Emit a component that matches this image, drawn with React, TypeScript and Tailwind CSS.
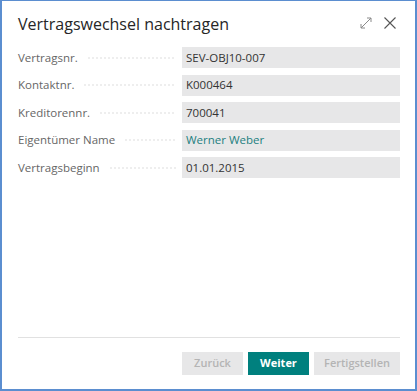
import React from 'react';

const fields = [
  { label: 'Vertragsnr.', value: 'SEV-OBJ10-007' },
  { label: 'Kontaktnr.', value: 'K000464' },
  { label: 'Kreditorennr.', value: '700041' },
  { label: 'Eigentümer Name', value: 'Werner Weber', link: true },
  { label: 'Vertragsbeginn', value: '01.01.2015' },
];

function FieldRow({ label, value, link }: { label: string; value: string; link?: boolean }) {
  return (
    <div className="flex h-[21px] items-center">
      <div className="flex w-[164px] items-center pr-[6px]">
        <span className="text-[11.5px] text-[#666666] whitespace-nowrap">{label}</span>
        {/* dotted leader */}
        <span className="ml-[9px] h-[2px] flex-1 bg-[radial-gradient(circle,#c8c8c8_0.5px,transparent_0.8px)] bg-[length:4px_2px] bg-repeat-x" />
      </div>
      <div className="flex h-full flex-1 items-center bg-[#e7e7e8] px-[4px]">
        <span className={`text-[11.5px] ${link ? 'text-[#1d7f80]' : 'text-[#333333]'}`}>{value}</span>
      </div>
    </div>
  );
}

export default function App() {
  return (
    <div
      className="flex h-[391px] w-[417px] flex-col border-x-2 border-b-2 border-t border-[#5b8ed0] bg-white pl-[16px] pr-[15px]"
      style={{ fontFamily: '"Segoe UI", "Open Sans", "Noto Sans", sans-serif' }}
    >
      <div className="flex h-[46px] items-start justify-between pt-[12px]">
        <h1 className="text-[16px] leading-[22px] text-[#262626]">Vertragswechsel nachtragen</h1>
        <div className="flex items-center gap-[12px] pt-[4px] pr-[4px]">
          <svg width="12" height="12" viewBox="0 0 12 12" fill="none" stroke="#8a8a8a" strokeWidth="1">
            <path d="M1 11L11 1M7 1h4v4M1 7v4h4" />
          </svg>
          <svg width="12" height="12" viewBox="0 0 12 12" fill="none" stroke="#555555" strokeWidth="1.1">
            <path d="M0.5 0.5l11 11M11.5 0.5l-11 11" />
          </svg>
        </div>
      </div>

      <div className="flex flex-col gap-[6.5px]">
        {fields.map((f) => (
          <FieldRow key={f.label} {...f} />
        ))}
      </div>

      <div className="flex-1" />

      <div className="h-px bg-[#e1e1e1]" />
      <div className="flex justify-end gap-[5px] pt-[14px] pb-[14px]">
        <button className="h-[23px] w-[61px] bg-[#e7e7e8] text-[11px] font-semibold text-[#b4b4b4]">Zurück</button>
        <button className="h-[23px] w-[61px] bg-[#00807e] text-[11px] font-bold text-white">Weiter</button>
        <button className="h-[23px] w-[86px] bg-[#e7e7e8] text-[11px] font-semibold text-[#b4b4b4]">Fertigstellen</button>
      </div>
    </div>
  );
}
